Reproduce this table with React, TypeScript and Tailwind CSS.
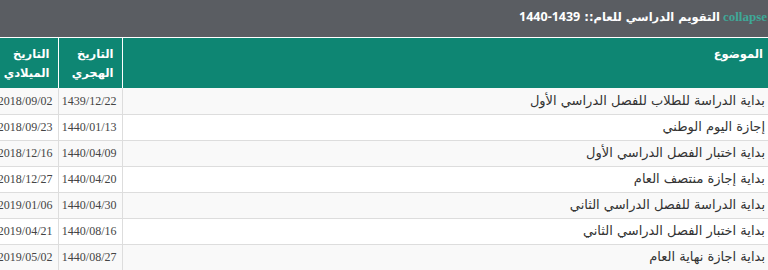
const ROWS = [
  { title: "بداية الدراسة للطلاب للفصل الدراسي الأول", hijri: "1439/12/22", greg: "2018/09/02" },
  { title: "إجازة اليوم الوطني", hijri: "1440/01/13", greg: "2018/09/23" },
  { title: "بداية اختبار الفصل الدراسي الأول", hijri: "1440/04/09", greg: "2018/12/16" },
  { title: "بداية إجازة منتصف العام", hijri: "1440/04/20", greg: "2018/12/27" },
  { title: "بداية الدراسة للفصل الدراسي الثاني", hijri: "1440/04/30", greg: "2019/01/06" },
  { title: "بداية اختبار الفصل الدراسي الثاني", hijri: "1440/08/16", greg: "2019/04/21" },
  { title: "بداية اجازة نهاية العام", hijri: "1440/08/27", greg: "2019/05/02" },
]

export default function App() {
  return (
    <div className="w-[768px] h-[270px] overflow-hidden bg-white font-['DejaVu_Sans',sans-serif]" dir="rtl">
      {/* Panel heading */}
      <div className="h-[38px] bg-[#5a5d62] flex items-center pr-[1px] pb-[3px] border-b border-white">
        <span className="font-['Liberation_Serif',serif] font-bold text-[13px] text-[#3fa898] ml-[3px]" dir="ltr">
          collapse
        </span>
        <span className="text-white font-bold text-[11.5px]">
          التقويم الدراسي للعام::{" "}
          <span className="font-['Open_Sans',sans-serif] text-[12.5px]">1439-1440</span>
        </span>
      </div>

      <div className="w-[774px]">
        <table className="w-[774px] border-collapse table-fixed">
          <colgroup>
            <col className="w-[646px]" />
            <col className="w-[64px]" />
            <col className="w-[64px]" />
          </colgroup>
          <thead>
            <tr className="bg-[#0e8673] text-white text-[11.5px] font-bold align-top">
              <th className="h-[50px] text-right pr-[5px] pt-[7px] leading-[19px]">الموضوع</th>
              <th className="h-[50px] text-right pr-[8px] pt-[7px] leading-[19px] border-r border-white">
                التاريخ
                <br />
                الهجري
              </th>
              <th className="h-[50px] text-right pr-[8px] pt-[7px] leading-[19px] border-r border-white">
                التاريخ
                <br />
                الميلادي
              </th>
            </tr>
          </thead>
          <tbody>
            {ROWS.map((r, i) => (
              <tr key={i} className={i % 2 === 0 ? "bg-[#f9f9f9]" : "bg-white"}>
                <td className="h-[26px] text-right pr-[3px] text-[13px] text-[#333] border-b border-[#dddddd]">
                  {r.title}
                </td>
                <td className="h-[26px] text-right pr-[5px] text-[12px] text-[#444] font-['Liberation_Serif',serif] border-b border-r border-[#dddddd]">
                  {r.hijri}
                </td>
                <td className="h-[26px] text-right pr-[5px] text-[12px] text-[#444] font-['Liberation_Serif',serif] border-b border-r border-[#dddddd]">
                  {r.greg}
                </td>
              </tr>
            ))}
          </tbody>
        </table>
      </div>
    </div>
  )
}
